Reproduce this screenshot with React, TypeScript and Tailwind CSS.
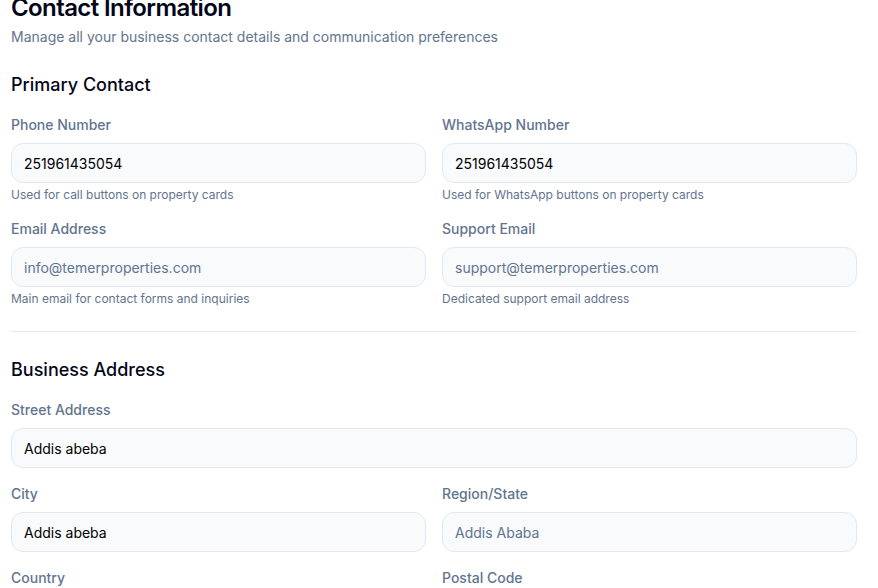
import React from 'react';

type Field = {
  label: string;
  value?: string;
  placeholder?: string;
  help?: string;
  wide?: boolean;
};

const PRIMARY: Field[] = [
  { label: 'Phone Number', value: '251961435054', help: 'Used for call buttons on property cards' },
  { label: 'WhatsApp Number', value: '251961435054', help: 'Used for WhatsApp buttons on property cards' },
  { label: 'Email Address', placeholder: 'info@temerproperties.com', help: 'Main email for contact forms and inquiries' },
  { label: 'Support Email', placeholder: 'support@temerproperties.com', help: 'Dedicated support email address' },
];

const ADDRESS: Field[] = [
  { label: 'Street Address', value: 'Addis abeba', wide: true },
  { label: 'City', value: 'Addis abeba' },
  { label: 'Region/State', placeholder: 'Addis Ababa' },
  { label: 'Country', value: 'Ethiopia' },
  { label: 'Postal Code', placeholder: '1000' },
];

function FormField({ field }: { field: Field }) {
  return (
    <div className={field.wide ? 'col-span-2' : ''}>
      <label className="block text-sm leading-5 font-medium text-slate-500 mb-2">{field.label}</label>
      <input
        type="text"
        defaultValue={field.value}
        placeholder={field.placeholder}
        className="block w-full h-10 px-3 rounded-xl border border-slate-200 bg-slate-50 text-sm text-black placeholder:text-slate-500 outline-none"
      />
      {field.help && <p className="mt-1 text-xs leading-4 text-slate-500">{field.help}</p>}
    </div>
  );
}

function Section({ title, fields }: { title: string; fields: Field[] }) {
  return (
    <section>
      <h2 className="text-lg leading-7 font-medium text-slate-950 mb-4">{title}</h2>
      <div className="grid grid-cols-2 gap-x-4 gap-y-4">
        {fields.map((f) => (
          <FormField key={f.label} field={f} />
        ))}
      </div>
    </section>
  );
}

export default function App() {
  return (
    <div className="min-h-screen bg-white overflow-hidden" style={{ fontFamily: 'Inter, "Noto Sans", sans-serif' }}>
      <div className="-mt-2 pl-[11px] pr-[21px]">
        <h1 className="text-2xl leading-8 font-semibold tracking-tight text-slate-950">Contact Information</h1>
        <p className="mt-[3px] text-sm leading-5 text-slate-500">
          Manage all your business contact details and communication preferences
        </p>

        <div className="mt-6">
          <Section title="Primary Contact" fields={PRIMARY} />
        </div>

        <div className="mt-6 border-t border-slate-200 pt-6">
          <Section title="Business Address" fields={ADDRESS} />
        </div>
      </div>
    </div>
  );
}
